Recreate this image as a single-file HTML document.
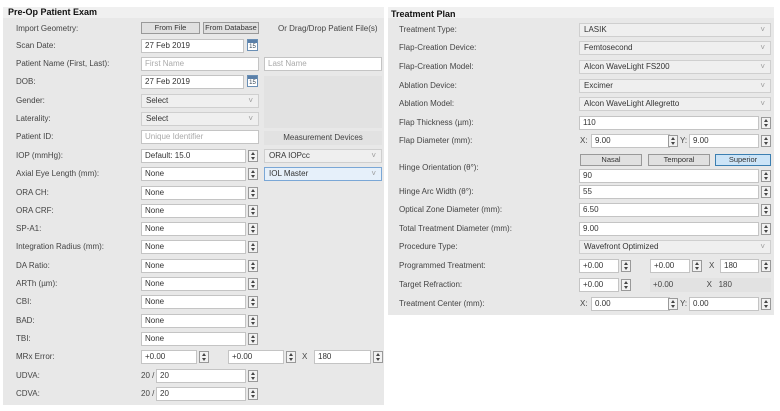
<!DOCTYPE html>
<html><head><meta charset="utf-8"><style>
*{margin:0;padding:0;box-sizing:border-box}
body{width:780px;height:411px;background:#fff;position:relative;overflow:hidden;font-family:"Liberation Sans",sans-serif;font-size:8px;color:#333}
.p{position:absolute;background:#e8e8e8}
.t{position:absolute;font-weight:bold;font-size:9px;color:#111}
.l{position:absolute;line-height:10px;color:#444;white-space:nowrap}
.i{position:absolute;height:14px;background:#fff;border:1px solid #c4c4c4;line-height:12px;padding-left:3px;color:#333}
.ph{color:#aaa}
.d{position:absolute;height:14px;background:#efefef;border:1px solid #cfcfcf;line-height:12px;padding-left:4px;color:#333}
.d:after{content:"˅";position:absolute;right:5px;top:0;color:#999;font-size:8px}
.s{position:absolute;width:10px;height:12px;background:#f2f2f2;border:1px solid #999}
.s:before{content:"";position:absolute;left:2px;top:1px;border-left:2.5px solid transparent;border-right:2.5px solid transparent;border-bottom:3px solid #444}
.s:after{content:"";position:absolute;left:2px;top:6px;border-left:2.5px solid transparent;border-right:2.5px solid transparent;border-top:3px solid #444}
.b{position:absolute;height:12px;background:#e0e0e0;border:1px solid #999;text-align:center;line-height:10px;color:#333;white-space:nowrap;overflow:hidden;font-size:7.5px}
.c{position:absolute;width:11px;height:12px;border:1px solid #6a8fb5;background:#fff;font-size:6px;text-align:center;line-height:14px;color:#345}
.c:before{content:"";position:absolute;left:0;right:0;top:0;height:3px;background:#5a7fa8}
</style></head><body>
<div class="p" style="left:3px;top:7px;width:381px;height:398px"></div>
<div class="p" style="left:3px;top:7px;width:381px;height:11px;background:#f0f0f0"></div>
<div class="t" style="left:8px;top:7px">Pre-Op Patient Exam</div>

<div class="l" style="left:16px;top:24px">Import Geometry:</div>
<div class="b" style="left:141px;top:22px;width:59px">From File</div>
<div class="b" style="left:203px;top:22px;width:56px">From Database</div>
<div class="l" style="left:278px;top:24px">Or Drag/Drop Patient File(s)</div>

<div class="l" style="left:16px;top:41px">Scan Date:</div>
<div class="i" style="left:141px;top:39px;width:103px">27 Feb 2019</div>
<div class="c" style="left:247px;top:39px">15</div>

<div class="l" style="left:16px;top:59px">Patient Name (First, Last):</div>
<div class="i ph" style="left:141px;top:57px;width:118px">First Name</div>
<div class="i ph" style="left:264px;top:57px;width:118px">Last Name</div>

<div class="l" style="left:16px;top:77px">DOB:</div>
<div class="i" style="left:141px;top:75px;width:103px">27 Feb 2019</div>
<div class="c" style="left:247px;top:75px">15</div>
<div style="position:absolute;left:264px;top:76px;width:118px;height:52px;background:#e2e2e2"></div>

<div class="l" style="left:16px;top:96px">Gender:</div>
<div class="d" style="left:141px;top:94px;width:118px">Select</div>
<div class="l" style="left:16px;top:114px">Laterality:</div>
<div class="d" style="left:141px;top:112px;width:118px">Select</div>

<div class="l" style="left:16px;top:132px">Patient ID:</div>
<div class="i ph" style="left:141px;top:130px;width:118px">Unique Identifier</div>
<div class="l" style="left:264px;top:131px;width:118px;height:14px;background:#e2e2e2;text-align:center;line-height:14px">Measurement Devices</div>

<div class="l" style="left:16px;top:151px">IOP (mmHg):</div>
<div class="i" style="left:141px;top:149px;width:105px">Default: 15.0</div><div class="s" style="left:248px;top:150px"></div>
<div class="d" style="left:264px;top:149px;width:118px">ORA IOPcc</div>

<div class="l" style="left:16px;top:169px">Axial Eye Length (mm):</div>
<div class="i" style="left:141px;top:167px;width:105px">None</div><div class="s" style="left:248px;top:168px"></div>
<div class="d" style="left:264px;top:167px;width:118px;background:#e6f0fa;border-color:#7aa7d6">IOL Master</div>

<div class="l" style="left:16px;top:188px">ORA CH:</div>
<div class="i" style="left:141px;top:186px;width:105px">None</div><div class="s" style="left:248px;top:187px"></div>
<div class="l" style="left:16px;top:206px">ORA CRF:</div>
<div class="i" style="left:141px;top:204px;width:105px">None</div><div class="s" style="left:248px;top:205px"></div>
<div class="l" style="left:16px;top:224px">SP-A1:</div>
<div class="i" style="left:141px;top:222px;width:105px">None</div><div class="s" style="left:248px;top:223px"></div>
<div class="l" style="left:16px;top:242px">Integration Radius (mm):</div>
<div class="i" style="left:141px;top:240px;width:105px">None</div><div class="s" style="left:248px;top:241px"></div>
<div class="l" style="left:16px;top:261px">DA Ratio:</div>
<div class="i" style="left:141px;top:259px;width:105px">None</div><div class="s" style="left:248px;top:260px"></div>
<div class="l" style="left:16px;top:279px">ARTh (µm):</div>
<div class="i" style="left:141px;top:277px;width:105px">None</div><div class="s" style="left:248px;top:278px"></div>
<div class="l" style="left:16px;top:297px">CBI:</div>
<div class="i" style="left:141px;top:295px;width:105px">None</div><div class="s" style="left:248px;top:296px"></div>
<div class="l" style="left:16px;top:316px">BAD:</div>
<div class="i" style="left:141px;top:314px;width:105px">None</div><div class="s" style="left:248px;top:315px"></div>
<div class="l" style="left:16px;top:334px">TBI:</div>
<div class="i" style="left:141px;top:332px;width:105px">None</div><div class="s" style="left:248px;top:333px"></div>

<div class="l" style="left:16px;top:352px">MRx Error:</div>
<div class="i" style="left:141px;top:350px;width:56px">+0.00</div><div class="s" style="left:199px;top:351px"></div>
<div class="i" style="left:228px;top:350px;width:56px">+0.00</div><div class="s" style="left:286px;top:351px"></div>
<div class="l" style="left:302px;top:352px">X</div>
<div class="i" style="left:314px;top:350px;width:57px">180</div><div class="s" style="left:373px;top:351px"></div>

<div class="l" style="left:16px;top:371px">UDVA:</div>
<div class="l" style="left:141px;top:371px">20 /</div>
<div class="i" style="left:156px;top:369px;width:90px">20</div><div class="s" style="left:248px;top:370px"></div>
<div class="l" style="left:16px;top:389px">CDVA:</div>
<div class="l" style="left:141px;top:389px">20 /</div>
<div class="i" style="left:156px;top:387px;width:90px">20</div><div class="s" style="left:248px;top:388px"></div>

<div class="p" style="left:388px;top:7px;width:386px;height:308px"></div>
<div class="p" style="left:388px;top:7px;width:386px;height:11px;background:#f0f0f0"></div>
<div class="t" style="left:391px;top:9px">Treatment Plan</div>

<div class="l" style="left:399px;top:25px">Treatment Type:</div>
<div class="d" style="left:579px;top:23px;width:192px">LASIK</div>
<div class="l" style="left:399px;top:43px">Flap-Creation Device:</div>
<div class="d" style="left:579px;top:41px;width:192px">Femtosecond</div>
<div class="l" style="left:399px;top:62px">Flap-Creation Model:</div>
<div class="d" style="left:579px;top:60px;width:192px">Alcon WaveLight FS200</div>
<div class="l" style="left:399px;top:81px">Ablation Device:</div>
<div class="d" style="left:579px;top:79px;width:192px">Excimer</div>
<div class="l" style="left:399px;top:99px">Ablation Model:</div>
<div class="d" style="left:579px;top:97px;width:192px">Alcon WaveLight Allegretto</div>

<div class="l" style="left:399px;top:118px">Flap Thickness (µm):</div>
<div class="i" style="left:579px;top:116px;width:180px">110</div><div class="s" style="left:761px;top:117px"></div>

<div class="l" style="left:399px;top:136px">Flap Diameter (mm):</div>
<div class="l" style="left:580px;top:136px">X:</div>
<div class="i" style="left:591px;top:134px;width:79px">9.00</div><div class="s" style="left:668px;top:135px"></div>
<div class="l" style="left:680px;top:136px">Y:</div>
<div class="i" style="left:689px;top:134px;width:70px">9.00</div><div class="s" style="left:761px;top:135px"></div>

<div class="b" style="left:580px;top:154px;width:62px">Nasal</div>
<div class="b" style="left:648px;top:154px;width:62px">Temporal</div>
<div class="b" style="left:715px;top:154px;width:56px;background:#cce4f7;border-color:#3c7fb1">Superior</div>
<div class="l" style="left:399px;top:163px">Hinge Orientation (θ°):</div>
<div class="i" style="left:579px;top:169px;width:180px">90</div><div class="s" style="left:761px;top:170px"></div>

<div class="l" style="left:399px;top:187px">Hinge Arc Width (θ°):</div>
<div class="i" style="left:579px;top:185px;width:180px">55</div><div class="s" style="left:761px;top:186px"></div>
<div class="l" style="left:399px;top:205px">Optical Zone Diameter (mm):</div>
<div class="i" style="left:579px;top:203px;width:180px">6.50</div><div class="s" style="left:761px;top:204px"></div>
<div class="l" style="left:399px;top:224px">Total Treatment Diameter (mm):</div>
<div class="i" style="left:579px;top:222px;width:180px">9.00</div><div class="s" style="left:761px;top:223px"></div>
<div class="l" style="left:399px;top:242px">Procedure Type:</div>
<div class="d" style="left:579px;top:240px;width:192px">Wavefront Optimized</div>

<div class="l" style="left:399px;top:261px">Programmed Treatment:</div>
<div class="i" style="left:579px;top:259px;width:40px">+0.00</div><div class="s" style="left:621px;top:260px"></div>
<div class="i" style="left:650px;top:259px;width:40px">+0.00</div><div class="s" style="left:692px;top:260px"></div>
<div class="l" style="left:709px;top:261px">X</div>
<div class="i" style="left:720px;top:259px;width:39px">180</div><div class="s" style="left:761px;top:260px"></div>

<div class="l" style="left:399px;top:280px">Target Refraction:</div>
<div class="i" style="left:579px;top:278px;width:40px">+0.00</div><div class="s" style="left:621px;top:279px"></div>
<div class="l" style="left:650px;top:278px;width:121px;height:14px;background:#e2e2e2;line-height:14px;padding-left:3px">+0.00&nbsp;&nbsp;&nbsp;&nbsp;&nbsp;&nbsp;&nbsp;&nbsp;&nbsp;&nbsp;&nbsp;&nbsp;&nbsp;&nbsp;&nbsp;X&nbsp;&nbsp;&nbsp;180</div>

<div class="l" style="left:399px;top:299px">Treatment Center (mm):</div>
<div class="l" style="left:580px;top:299px">X:</div>
<div class="i" style="left:591px;top:297px;width:79px">0.00</div><div class="s" style="left:668px;top:298px"></div>
<div class="l" style="left:680px;top:299px">Y:</div>
<div class="i" style="left:689px;top:297px;width:70px">0.00</div><div class="s" style="left:761px;top:298px"></div>
</body></html>
